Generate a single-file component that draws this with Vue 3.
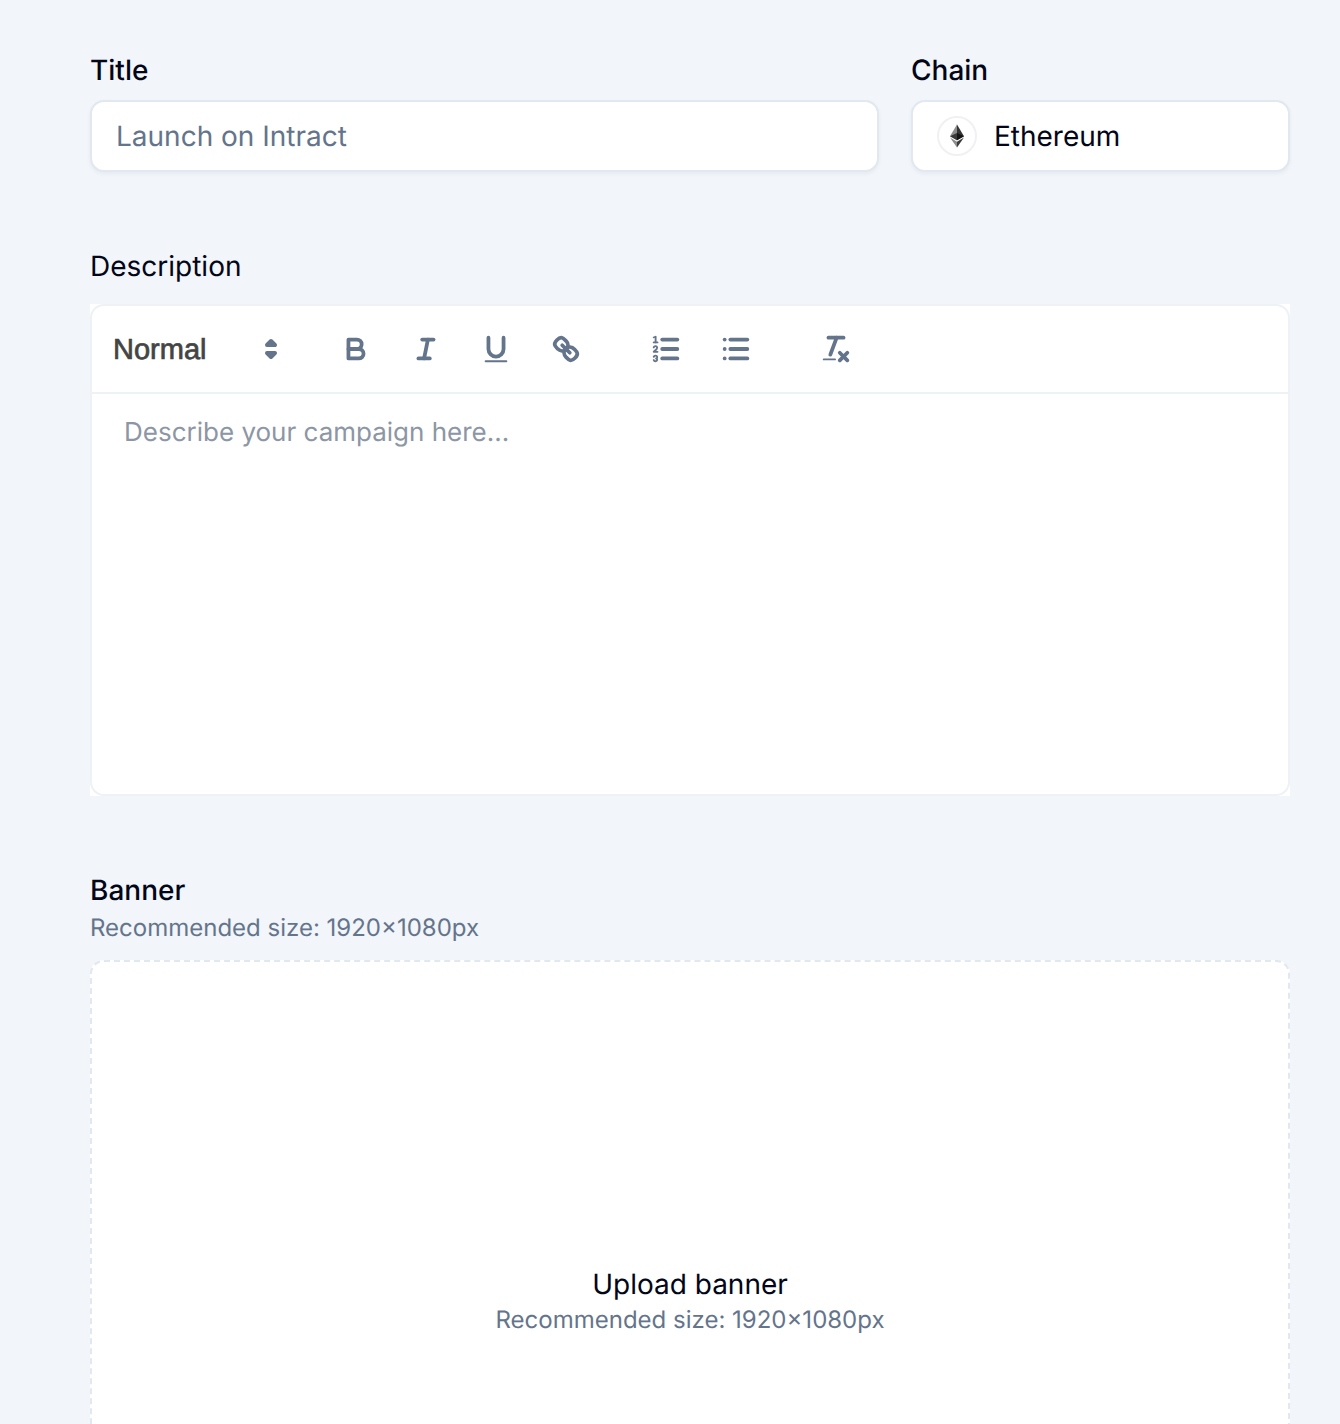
<template>
  <div class="page">
    <div class="row">
      <div class="field title-field">
        <label class="label">Title</label>
        <div class="input placeholder">Launch on Intract</div>
      </div>
      <div class="field chain-field">
        <label class="label">Chain</label>
        <div class="input chain">
          <span class="chain-icon">
            <svg width="14" height="24" viewBox="0 0 256 417">
              <path fill="#343434" d="M127.961 0l-2.795 9.5v275.668l2.795 2.79 127.962-75.638z" />
              <path fill="#8c8c8c" d="M127.962 0L0 212.32l127.962 75.639V154.158z" />
              <path fill="#3c3c3b" d="M127.961 312.187l-1.575 1.92v98.199l1.575 4.601L256 236.587z" />
              <path fill="#8c8c8c" d="M127.962 416.905v-104.72L0 236.585z" />
              <path fill="#141414" d="M127.961 287.958l127.96-75.637-127.96-58.162z" />
              <path fill="#393939" d="M0 212.32l127.96 75.638V154.159z" />
            </svg>
          </span>
          <span>Ethereum</span>
        </div>
      </div>
    </div>

    <div class="section description">
      <label class="label regular">Description</label>
      <div class="editor">
        <div class="editor-inner">
          <div class="toolbar">
            <div class="picker">
              <span class="picker-label">Normal</span>
              <svg class="icon picker-icon" viewBox="0 0 18 18">
                <polygon class="stroke" points="7 11 9 13 11 11 7 11" />
                <polygon class="stroke" points="7 7 9 5 11 7 7 7" />
              </svg>
            </div>

            <div class="group">
              <button class="tool">
                <svg class="icon" viewBox="0 0 18 18">
                  <path class="stroke" d="M5,4H9.5A2.5,2.5,0,0,1,12,6.5v0A2.5,2.5,0,0,1,9.5,9H5A0,0,0,0,1,5,9V4A0,0,0,0,1,5,4Z" />
                  <path class="stroke" d="M5,9h5.5A2.5,2.5,0,0,1,13,11.5v0A2.5,2.5,0,0,1,10.5,14H5a0,0,0,0,1,0,0V9A0,0,0,0,1,5,9Z" />
                </svg>
              </button>
              <button class="tool">
                <svg class="icon" viewBox="0 0 18 18">
                  <line class="stroke" x1="7" x2="13" y1="4" y2="4" />
                  <line class="stroke" x1="5" x2="11" y1="14" y2="14" />
                  <line class="stroke" x1="8" x2="10" y1="14" y2="4" />
                </svg>
              </button>
              <button class="tool">
                <svg class="icon" viewBox="0 0 18 18">
                  <path class="stroke" d="M5,3V9a4.012,4.012,0,0,0,4,4H9a4.012,4.012,0,0,0,4-4V3" />
                  <rect class="fill" height="1" rx="0.5" ry="0.5" width="12" x="3" y="15" />
                </svg>
              </button>
              <button class="tool">
                <svg class="icon" viewBox="0 0 18 18">
                  <line class="stroke" x1="7" x2="11" y1="7" y2="11" />
                  <path class="stroke" d="M8.9,4.577a3.476,3.476,0,0,1,.36,4.679A3.476,3.476,0,0,1,4.577,8.9C3.185,7.5,2.035,6.4,4.217,4.217S7.5,3.185,8.9,4.577Z" />
                  <path class="stroke" d="M13.423,9.1a3.476,3.476,0,0,0-4.679-.36,3.476,3.476,0,0,0,.36,4.679c1.392,1.392,2.5,2.542,4.679.36S14.815,10.5,13.423,9.1Z" />
                </svg>
              </button>
            </div>

            <div class="group">
              <button class="tool">
                <svg class="icon" viewBox="0 0 18 18">
                  <line class="stroke" x1="7" x2="15" y1="4" y2="4" />
                  <line class="stroke" x1="7" x2="15" y1="9" y2="9" />
                  <line class="stroke" x1="7" x2="15" y1="14" y2="14" />
                  <line class="stroke thin" x1="2.5" x2="4.5" y1="5.5" y2="5.5" />
                  <path class="fill" d="M3.5,6A0.5,0.5,0,0,1,3,5.5V3.085l-0.276.138A0.5,0.5,0,0,1,2.053,3c-0.124-.247-0.023-0.324.224-0.447l1-.5A0.5,0.5,0,0,1,4,2.5v3A0.5,0.5,0,0,1,3.5,6Z" />
                  <path class="stroke thin" d="M4.5,10.5h-2c0-.234,1.85-1.076,1.85-2.234A0.959,0.959,0,0,0,2.5,8.156" />
                  <path class="stroke thin" d="M2.5,14.846a0.959,0.959,0,0,0,1.85-.109A0.7,0.7,0,0,0,3.75,14a0.688,0.688,0,0,0,.6-0.736,0.959,0.959,0,0,0-1.85-.109" />
                </svg>
              </button>
              <button class="tool">
                <svg class="icon" viewBox="0 0 18 18">
                  <line class="stroke" x1="6" x2="15" y1="4" y2="4" />
                  <line class="stroke" x1="6" x2="15" y1="9" y2="9" />
                  <line class="stroke" x1="6" x2="15" y1="14" y2="14" />
                  <line class="stroke" x1="3" x2="3" y1="4" y2="4" />
                  <line class="stroke" x1="3" x2="3" y1="9" y2="9" />
                  <line class="stroke" x1="3" x2="3" y1="14" y2="14" />
                </svg>
              </button>
            </div>

            <div class="group">
              <button class="tool">
                <svg class="icon" viewBox="0 0 18 18">
                  <line class="stroke" x1="5" x2="13" y1="3" y2="3" />
                  <line class="stroke" x1="6" x2="9.35" y1="12" y2="3" />
                  <line class="stroke" x1="11" x2="15" y1="11" y2="15" />
                  <line class="stroke" x1="15" x2="11" y1="11" y2="15" />
                  <rect class="fill" height="1" rx="0.5" ry="0.5" width="7" x="2" y="14" />
                </svg>
              </button>
            </div>
          </div>
          <div class="editor-body">Describe your campaign here...</div>
        </div>
      </div>
    </div>

    <div class="section banner-section">
      <label class="label">Banner</label>
      <p class="hint">Recommended size: 1920×1080px</p>
      <div class="dropzone">
        <span class="upload-title">Upload banner</span>
        <span class="hint tight">Recommended size: 1920×1080px</span>
      </div>
    </div>
  </div>
</template>

<script setup>
</script>

<style>
html, body {
  background: #f2f5fa;
}
</style>

<style scoped>
.page {
  box-sizing: border-box;
  height: 1424px;
  overflow: hidden;
  padding: 50px 50px 0 90px;
  background: #f2f5fa;
  font-family: Inter, "Noto Sans", sans-serif;
  color: #020617;
  text-rendering: geometricPrecision;
}

.row {
  display: flex;
  gap: 32px;
}

.field {
  display: flex;
  flex-direction: column;
}

.title-field { flex: 1; }
.chain-field { width: 379px; }

.label {
  display: block;
  font-size: 28px;
  line-height: 40px;
  font-weight: 500;
  color: #020617;
}

.label.regular { font-weight: 400; }

.input {
  box-sizing: border-box;
  height: 72px;
  margin-top: 10px;
  padding: 0 24px;
  display: flex;
  align-items: center;
  background: #fff;
  border: 2px solid #e2e8f0;
  border-radius: 14px;
  box-shadow: 0 2px 4px rgba(15, 23, 42, 0.05);
  font-size: 28px;
}

.placeholder { color: #64748b; }

.chain { gap: 17px; }

.chain-icon {
  box-sizing: border-box;
  width: 40px;
  height: 40px;
  display: flex;
  align-items: center;
  justify-content: center;
  border: 2px solid #f1f1f3;
  border-radius: 50%;
}

.section { margin-top: 74px; }

.editor {
  margin-top: 18px;
  background: #fff;
}

.editor-inner {
  box-sizing: border-box;
  height: 492px;
  border: 2px solid #eef1f6;
  border-radius: 14px;
  background: #fff;
}

.toolbar {
  box-sizing: border-box;
  height: 88px;
  padding-left: 21px;
  display: flex;
  align-items: center;
  border-bottom: 2px solid #eef1f6;
}

.picker {
  width: 176px;
  display: flex;
  align-items: center;
  justify-content: space-between;
  font-family: "Liberation Sans", Arial, sans-serif;
  font-size: 29px;
  font-weight: 500;
  color: #444;
  -webkit-text-stroke: 0.7px #444;
}

.picker-label { padding-top: 2px; }

.group {
  display: flex;
  margin-left: 30px;
}

.picker + .group { margin-left: 32px; }

.tool {
  width: 70px;
  height: 48px;
  padding: 0;
  border: none;
  background: none;
  display: flex;
  align-items: center;
  justify-content: center;
}

.icon {
  width: 34px;
  height: 34px;
  display: block;
}

.picker-icon {
  width: 36px;
  height: 36px;
}

.stroke {
  fill: none;
  stroke: #64748b;
  stroke-width: 2;
  stroke-linecap: round;
  stroke-linejoin: round;
}

.thin { stroke-width: 1; }

.fill { fill: #64748b; }

.editor-body {
  padding: 23px 32px;
  font-size: 26px;
  line-height: 32px;
  color: #8c96a5;
}

.banner-section { margin-top: 74px; }

.hint {
  margin: 0;
  font-size: 24px;
  line-height: 36px;
  color: #64748b;
}

.hint.tight {
  line-height: 34px;
  padding-top: 1px;
}

.dropzone {
  box-sizing: border-box;
  height: 682px;
  margin-top: 14px;
  display: flex;
  flex-direction: column;
  align-items: center;
  justify-content: center;
  background: #fff;
  border: 2px dashed #e2e8f0;
  border-radius: 14px;
}

.upload-title {
  font-size: 28px;
  line-height: 36px;
}
</style>
